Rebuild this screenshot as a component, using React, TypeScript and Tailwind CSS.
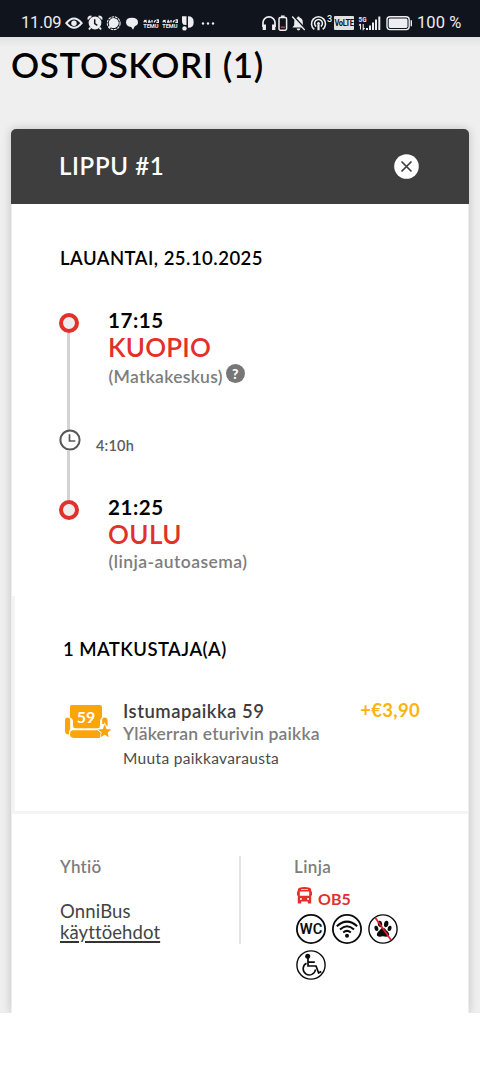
import React from "react";

function StatusBar() {
  return (
    <header className="flex h-[37px] shrink-0 items-start bg-[#10141d] pt-[13px] pl-[21px] font-[Roboto,sans-serif] text-[#eceef1]">
      <span className="w-[44px] text-[16.5px] leading-5 tracking-[-0.2px]">11.09</span>
      <svg className="h-5 w-[18px]" viewBox="0 0 18 20" fill="none" stroke="currentColor" strokeWidth="2">
        <path d="M1.3 10.2Q9 1 16.7 10.2Q9 19.4 1.3 10.2Z" />
        <circle cx="9" cy="10.2" r="2.7" fill="currentColor" stroke="none" />
      </svg>
      <svg className="ml-[4px] h-5 w-[16px]" viewBox="0 0 16 20" fill="none" stroke="currentColor" strokeWidth="2">
        <circle cx="8" cy="10" r="6.4" fill="currentColor" stroke="none" />
        <path d="M1.5 6.5Q1 3.5 4.5 3.5M14.5 6.5Q15 3.5 11.5 3.5M3.5 14.5L2 16.5M12.5 14.5L14 16.5" />
        <path d="M7.7 6.2V10.5L10.3 12.3" stroke="#10141d" strokeWidth="1.5" />
      </svg>
      <svg className="ml-[3px] h-5 w-[15px]" viewBox="0 0 15 20">
        <circle cx="7.7" cy="10.2" r="6.4" fill="none" stroke="currentColor" strokeWidth="1.1" strokeDasharray="2.6 0.8" />
        <path d="M2.7 10a5 5 0 1 1 2.5 4.4L2.4 15.2l.9-2.8Z" fill="currentColor" />
      </svg>
      <svg className="ml-[4px] h-5 w-[14px]" viewBox="0 0 14 20" fill="currentColor">
        <path d="M1 9.2Q1 4.8 7 4.8Q13 4.8 13 9.4Q13 12 9.8 13.2L8 16.8L6.2 13.9Q1 13.4 1 9.2Z" />
      </svg>
      <TemuMark className="ml-[4px]" />
      <TemuMark className="ml-[3px]" />
      <svg className="ml-[3px] h-5 w-[13px]" viewBox="0 0 13 20" fill="currentColor">
        <path d="M1 3.3H5.5V12.1L2.5 11.8Q.8 10.8 1 8ZM7 3.3Q12.7 3.3 12.7 9.2Q12.7 14.7 7 14.7Z" />
        <circle cx="3.5" cy="15.4" r="2.2" />
      </svg>
      <svg className="ml-[6px] h-5 w-[15px]" viewBox="0 0 15 20" fill="currentColor">
        <circle cx="3" cy="10.5" r="1.2" /><circle cx="8" cy="10.5" r="1.2" /><circle cx="13" cy="10.5" r="1.2" />
      </svg>

      <svg className="ml-[46px] h-5 w-[16px]" viewBox="0 0 16 20" fill="none" stroke="currentColor" strokeWidth="1.7">
        <path d="M2 14V9.6a6 5.7 0 0 1 12 0V14" />
        <path d="M3.3 11.5V17M12.7 11.5V17" strokeWidth="3.3" />
      </svg>
      <svg className="ml-[1px] h-5 w-[10px]" viewBox="0 0 10 20">
        <rect x="1" y="4.5" width="7.6" height="12.7" rx="1.4" fill="none" stroke="currentColor" strokeWidth="1.5" />
        <path d="M3 3.2H6.6" stroke="currentColor" strokeWidth="1.5" />
        <path d="M2.7 14.2H6.9" stroke="#a43b43" strokeWidth="1.8" />
      </svg>
      <svg className="ml-[3px] h-5 w-[15px]" viewBox="0 0 15 20">
        <path d="M7.5 3.4Q8.6 3.4 8.6 4.6Q11.8 5.5 11.8 9.4V12.3L13.6 14.5H1.4L3.2 12.3V9.4Q3.2 5.5 6.4 4.6Q6.4 3.4 7.5 3.4ZM5.6 15.4H9.4Q9 17.4 7.5 17.4Q6 17.4 5.6 15.4Z" fill="currentColor" />
        <path d="M2.6 3.3L14.6 16.3" stroke="#10141d" strokeWidth="1.8" />
        <path d="M1.2 3.5L13.7 17" stroke="currentColor" strokeWidth="1.3" />
      </svg>
      <svg className="ml-[4px] h-5 w-[17px]" viewBox="0 0 17 20" fill="none" stroke="currentColor" strokeWidth="1.6">
        <path d="M4.3 16.4a7 7 0 1 1 8.4 0M6.1 13.5a3.9 3.9 0 1 1 4.8 0" />
        <circle cx="8.5" cy="10.6" r="1.5" fill="currentColor" stroke="none" />
        <path d="M8.5 12V17.2" strokeWidth="2.2" />
      </svg>
      <span className="w-[7px] text-[9px] leading-[12px] font-medium">3</span>
      <span className="mt-[3px] flex h-[14px] w-[20px] items-center justify-center rounded-[1px] bg-[#dfe1e4] text-[7.5px] font-bold tracking-[-0.4px] text-[#10141d]">
        <span className="scale-y-[1.25]">VoLTE</span>
      </span>
      <svg className="ml-[4px] h-5 w-[24px] overflow-visible" viewBox="0 0 24 20" fill="currentColor">
        <text x="0.5" y="9" fontSize="7.2" fontWeight="700" fontFamily="Roboto, sans-serif" textLength="8" lengthAdjust="spacingAndGlyphs">5G</text>
        <path d="M2.5 11V16.5M1 12.4L2.5 11M5.2 11V16.5L6.7 15.1" fill="none" stroke="currentColor" strokeWidth="1.1" />
        <path d="M8 15h2v2H8ZM11 12.5h2V17h-2ZM14 9.5h2V17h-2ZM17 6.5h2V17h-2ZM20.3 3.5h2V17h-2Z" />
      </svg>
      <svg className="ml-[4px] h-5 w-[28px]" viewBox="0 0 28 20">
        <rect x="1" y="3.8" width="22.2" height="12.8" rx="3" fill="none" stroke="currentColor" strokeWidth="1.4" />
        <rect x="2.7" y="5.5" width="18.8" height="9.4" rx="1.4" fill="currentColor" />
        <path d="M25.3 7.2V13.2" stroke="currentColor" strokeWidth="1.4" />
      </svg>
      <span className="ml-[3px] text-[16.5px] leading-5 tracking-[0.1px] whitespace-nowrap">100 %</span>
    </header>
  );
}

function TemuMark({ className }: { className: string }) {
  return (
    <svg className={"h-5 w-[16px] " + className} viewBox="0 0 16 20" fill="none" stroke="currentColor">
      <path d="M.6 9.3L3.5 7M1.2 7.2L4 9.4M5 9H7.8M6.2 6.8V9.6M9 7V9.4M11 9.3L12.6 7.1M13.5 7H15.3V9.3H13.3" strokeWidth="1.3" />
      <text x="0.2" y="15" fontSize="5.8" fontWeight="700" fontFamily="Roboto, sans-serif" textLength="15.3" lengthAdjust="spacingAndGlyphs" fill="currentColor" stroke="none">TEMU</text>
    </svg>
  );
}

function StopDot() {
  return <span className="size-[20px] shrink-0 rounded-full border-[4.5px] border-[#e2302a] bg-[#eeeeee]" />;
}

function Journey() {
  return (
    <section className="flex pt-[43px] pl-[47px]">
      <div className="mt-px flex h-[207px] w-[20px] shrink-0 flex-col items-center">
        <StopDot />
        <span className="-ml-[1px] w-[3px] flex-1 bg-[#d3d3d3]" />
        <svg className="-mt-px ml-[1px] size-[22px] shrink-0" viewBox="0 0 22 22" fill="none" stroke="#585858" strokeWidth="2">
          <circle cx="11" cy="11" r="9.6" fill="#fff" />
          <path d="M10.5 5.3V12H16.3" strokeWidth="1.7" />
        </svg>
        <span className="-ml-[1px] h-[49px] w-[3px] bg-[#d3d3d3]" />
        <StopDot />
      </div>
      <div className="flex flex-col">
        <div className="-mt-[3px] pl-[29px]">
          <p className="h-[23px] text-[20.5px] leading-[23px] font-bold tracking-[0.6px] text-black">17:15</p>
          <p className="h-[31px] text-[26px] leading-[31px] font-semibold tracking-[0.2px] text-[#e2302a]">KUOPIO</p>
          <div className="flex h-[28px] items-center">
            <p className="pl-[0.5px] text-[17.5px] font-semibold tracking-[0.3px] text-[#7d7d7d]">(Matkakeskus)</p>
            <span className="mb-[7px] ml-[3px] flex size-[19px] items-center justify-center rounded-full bg-[#777] text-[14px] leading-none font-black text-white">?</span>
          </div>
        </div>
        <p className="mt-[45px] h-[20px] pl-[17px] text-[14.5px] leading-[20px] font-semibold tracking-[0.2px] text-[#5c5c5c]">4:10h</p>
        <div className="mt-[40px] pl-[29px]">
          <p className="h-[23px] text-[20.5px] leading-[23px] font-bold tracking-[0.6px] text-black">21:25</p>
          <p className="h-[31px] text-[26px] leading-[31px] font-semibold tracking-[0.4px] text-[#e2302a]">OULU</p>
          <p className="mt-px h-[22px] pl-[0.5px] text-[17.5px] leading-[22px] font-semibold tracking-[0.45px] text-[#7d7d7d]">(linja-autoasema)</p>
        </div>
      </div>
    </section>
  );
}

function SeatIcon() {
  return (
    <svg className="mt-[26px] ml-px h-[36px] w-[48px] shrink-0" viewBox="0 0 48 36" fill="#fca50a">
      <path d="M6.5 0H35Q37 0 37 2.4V12.2Q35 14 35 16V21Q35 23.3 33 23.3H10.5Q8 23.3 8 21V15.5Q7.6 13.2 5 12.4V2.4Q5 0 6.5 0Z" />
      <path d="M0 15Q0 12.5 3 12.5Q5.2 12.8 5.2 15V24Q3.8 25.5 3.8 29.5Q0 29.5 0 26Z" />
      <path d="M37.2 19V14.8Q37.2 12.4 39.8 12.4Q42.6 12.4 42.6 15.5V21.5L39.7 19Z" />
      <path d="M8.5 25.3H33L37 29L35 33H8.5Q5 32.7 5 29.3Q5 25.3 8.5 25.3Z" />
      <path d="M39.7 19.2L41.5 24L46.3 24.4L42.7 27.6L43.8 32.3L39.7 29.8L35.5 32.3L36.6 27.6L33 24.4L37.8 24Z" stroke="#fff" strokeWidth="1.4" paintOrder="stroke" />
      <text x="21" y="18.3" textAnchor="middle" fill="#fff" fontFamily="Lato, sans-serif" fontSize="16" fontWeight="700">59</text>
    </svg>
  );
}

function Passengers() {
  return (
    <section className="flex h-[218px] flex-col border-b-3 border-l-3 border-[#f4f4f4] pr-[48px] pl-[49px]">
      <h2 className="mt-[43px] -ml-px h-[20px] text-[18.5px] leading-[20px] font-semibold tracking-[0.45px] whitespace-nowrap text-black">1 MATKUSTAJA(A)</h2>
      <div className="mt-[20px] flex">
        <SeatIcon />
        <div className="mt-[21px] ml-[10px] flex flex-1 flex-col">
          <div className="flex h-[23px] items-center justify-between">
            <span className="text-[18.5px] font-semibold tracking-[0.5px] whitespace-nowrap text-[#3d3d3d]">Istumapaikka 59</span>
            <span className="mb-[2px] text-[18.5px] font-bold tracking-[0.3px] whitespace-nowrap text-[#fbb30f]">+€3,90</span>
          </div>
          <span className="h-[22px] text-[17.5px] leading-[22px] font-semibold tracking-[0.2px] whitespace-nowrap text-[#7d7d7d]">Yläkerran eturivin paikka</span>
          <span className="mt-[2px] h-[22px] text-[15.5px] leading-[22px] tracking-[0.33px] whitespace-nowrap text-[#4b4b4b]">Muuta paikkavarausta</span>
        </div>
      </div>
    </section>
  );
}

function Amenity({ children, thin = false }: { children: React.ReactNode; thin?: boolean }) {
  return (
    <svg className="size-[30px]" viewBox="0 0 30 30" fill="none" stroke="#0b0b0b">
      <circle cx="15" cy="15" r="14.1" strokeWidth={thin ? 1.4 : 1.8} />
      {children}
    </svg>
  );
}

function Operator() {
  return (
    <section className="flex pt-[42px] pl-[48px]">
      <div className="h-[88px] w-[181px] border-r-2 border-[#e4e4e4]">
        <h3 className="h-[22px] text-[17px] leading-[22px] font-semibold tracking-[0.2px] text-[#7d7d7d]">Yhtiö</h3>
        <p className="mt-[22px] h-[22px] text-[18.5px] leading-[22px] tracking-[0.15px] text-[#444]">OnniBus</p>
        <a className="-mt-px block h-[22px] text-[18.5px] leading-[22px] tracking-[0.1px] text-[#444] underline decoration-[#333] decoration-[1.5px] underline-offset-[2px]">käyttöehdot</a>
      </div>
      <div className="ml-[53px] flex flex-col">
        <h3 className="h-[22px] text-[17px] leading-[22px] font-semibold tracking-[0.4px] text-[#7d7d7d]">Linja</h3>
        <div className="mt-[8px] flex h-[22px] items-center pl-[3px]">
          <svg className="mb-[3px] h-[17px] w-[15px]" viewBox="0 0 15 17" fill="#e2302a">
            <path fillRule="evenodd" d="M2.5 .8Q7.5-.6 12.5 .8Q14.2 1.3 14.2 3V16.6H10.8V14.6H4.2V16.6H.8V3Q.8 1.3 2.5 .8ZM4 2.2V3H11V2.2ZM2.8 4.5V8.8H12.2V4.5ZM3.9 11a1 1 0 1 0 0 2a1 1 0 1 0 0-2ZM11.1 11a1 1 0 1 0 0 2a1 1 0 1 0 0-2Z" />
            <path d="M0 4.5H1V8.5H0ZM14 4.5H15V8.5H14Z" />
          </svg>
          <span className="mt-[3px] ml-[6px] text-[16px] font-bold text-[#e2302a]">OB5</span>
        </div>
        <div className="mt-[6px] ml-[2px] grid w-[102px] grid-cols-3 gap-[6px]">
          <Amenity>
            <text x="15" y="20.2" textAnchor="middle" fontSize="15" fontWeight="600" fontFamily="Roboto, sans-serif" textLength="22.5" lengthAdjust="spacingAndGlyphs" fill="#0b0b0b" stroke="none">WC</text>
          </Amenity>
          <Amenity>
            <path d="M4.8 12.2Q15 3.1 25.2 12.2M8 15.5Q15 9 22 15.5M11.2 18.6Q15 15.2 18.8 18.6" strokeWidth="2" />
            <circle cx="15" cy="21.7" r="2" fill="#0b0b0b" stroke="none" />
          </Amenity>
          <Amenity thin>
            <g fill="#0b0b0b" stroke="none">
              <ellipse cx="12" cy="10" rx="2.2" ry="3.3" transform="rotate(-8 12 10)" />
              <ellipse cx="18.2" cy="10" rx="2.2" ry="3.3" transform="rotate(8 18.2 10)" />
              <ellipse cx="8.4" cy="14.4" rx="1.9" ry="2.7" transform="rotate(-20 8.4 14.4)" />
              <ellipse cx="21.6" cy="14.4" rx="1.9" ry="2.7" transform="rotate(20 21.6 14.4)" />
              <path d="M15 13.8Q17.2 14 18.5 16.5Q22 19.2 20.9 21.7Q19.3 23.4 15 22.3Q10.7 23.4 9.1 21.7Q8 19.2 11.5 16.5Q12.8 14 15 13.8Z" />
            </g>
            <path d="M7.3 3.7L23.2 26.3" stroke="#e51c2a" strokeWidth="1.7" />
          </Amenity>
          <Amenity thin>
            <circle cx="11.7" cy="6.3" r="2.5" fill="#0b0b0b" stroke="none" />
            <path d="M12 8V16H20L22.6 22.8L25.3 21.6M12 12.2H18.8" strokeWidth="1.7" />
            <path d="M10.5 13.2a6.2 6.2 0 1 0 9 6.3" strokeWidth="1.6" />
          </Amenity>
        </div>
      </div>
    </section>
  );
}

export default function App() {
  return (
    <div className="flex h-[1067px] w-[480px] flex-col bg-white font-[Lato,sans-serif]">
      <StatusBar />
      <main className="flex h-[976px] flex-col overflow-hidden bg-[#efefef] bg-linear-to-b from-[#e2e2e2] to-[#efefef] to-[10px] px-[11px]">
        <h1 className="mt-[7px] h-[40px] text-[35px] leading-[40px] font-semibold tracking-[0.6px] whitespace-nowrap text-black">OSTOSKORI (1)</h1>
        <article className="mt-[45px] flex flex-1 flex-col rounded-t-[5px] shadow-[0_0_10px_rgba(0,0,0,0.2)]">
          <div className="flex h-[75px] shrink-0 items-center justify-between rounded-t-[5px] bg-[#3e3e3e] pr-[50px] pl-[48px]">
            <h2 className="mb-[2px] text-[24px] font-semibold tracking-[0.65px] text-white">LIPPU #1</h2>
            <svg className="size-[25px]" viewBox="0 0 25 25">
              <circle cx="12.5" cy="12.5" r="12.3" fill="#fff" />
              <path d="M8 8L17 17M17 8L8 17" stroke="#3e3e3e" strokeWidth="1.7" strokeLinecap="round" />
            </svg>
          </div>
          <div className="mx-[1px] flex flex-1 flex-col bg-white">
            <div className="h-[392px]">
              <h2 className="mt-[43px] h-[22px] pl-[48px] text-[18.5px] leading-[22px] font-semibold tracking-[0.48px] text-black">LAUANTAI, 25.10.2025</h2>
              <Journey />
            </div>
            <Passengers />
            <Operator />
          </div>
        </article>
      </main>
    </div>
  );
}
